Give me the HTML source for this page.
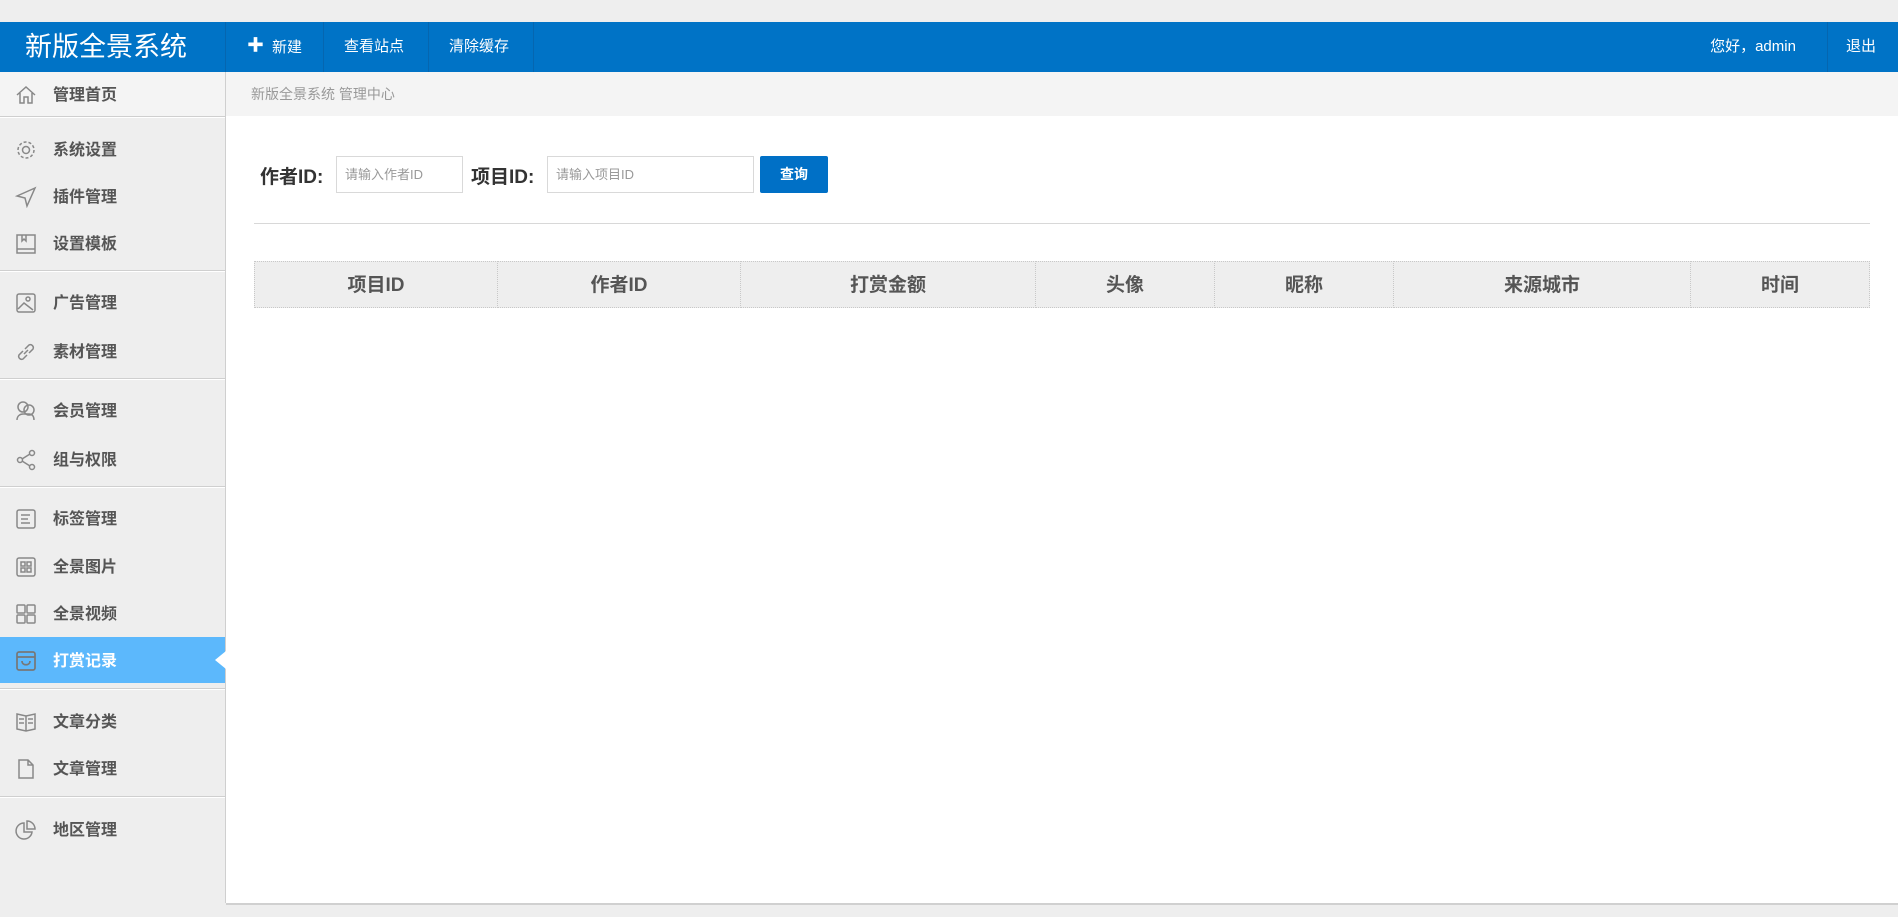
<!DOCTYPE html>
<html><head><meta charset="utf-8"><style>
*{margin:0;padding:0;box-sizing:border-box}
body{width:1898px;height:917px;background:#eeeeee;font-family:"Liberation Sans","Noto Sans CJK SC",sans-serif;position:relative;overflow:hidden}
.abs{position:absolute}
#hdr{left:0;top:22px;width:1898px;height:50px;background:#0073c6}
.logo{left:25px;top:22px;height:50px;line-height:50px;color:#fff;font-size:27px}
.nav{top:22px;height:50px;line-height:50px;color:#fff;font-size:15px;text-align:center;border-left:1px solid #0566b0}
#side{left:0;top:72px;width:226px;height:831px;background:#eeeeee;border-right:1px solid #cfcfcf}
.it{left:0;width:225px;height:46px;line-height:46px;font-size:16px;font-weight:bold;color:#555}
.it span{position:absolute;left:53px;top:2px}
.it svg{position:absolute;left:15px;top:13px}
.bd{left:0;width:225px;height:2px;border-top:1px solid #cfcfcf;border-bottom:1px solid #fff}
#crumb{left:226px;top:72px;width:1672px;height:44px;background:#f4f4f4;color:#999;font-size:14px;line-height:44px;padding-left:25px}
#main{left:226px;top:116px;width:1672px;height:787px;background:#fff}
.lbl{font-size:19px;font-weight:bold;color:#333;top:162px}
.inp{top:156px;height:37px;border:1px solid #d9d9d9;background:#fff;color:#999;font-size:13px;line-height:35px;padding-left:8px}
.th{top:261px;height:47px;line-height:47px;background:#eeeeee;border:1px dotted #c8c8c8;text-align:center;font-size:19px;font-weight:bold;color:#555}
</style></head><body>
<div id="hdr" class="abs"></div>
<div class="abs logo">新版全景系统</div>
<div class="abs nav" style="left:225px;width:98px"><span style="font-weight:bold;font-size:17px;margin-right:8px;position:relative;top:-1px">✚</span>新建</div>
<div class="abs nav" style="left:323px;width:105px;text-indent:-4px">查看站点</div>
<div class="abs nav" style="left:428px;width:105px;text-indent:-4px">清除缓存</div>
<div class="abs nav" style="left:533px;width:0;height:50px"></div>
<div class="abs nav" style="left:1690px;width:126px;border:none">您好，admin</div>
<div class="abs nav" style="left:1827px;width:71px;text-indent:-4px">退出</div>

<div id="side" class="abs"></div>
<div class="abs" style="left:0;top:72px;width:225px;height:44px;background:#f4f4f4"></div>
<div class="abs it" style="top:71px"><svg width="22" height="22" viewBox="0 0 22 22" fill="none" stroke="#888" stroke-width="1.5"><path d="M2 11L11 3l9 8M5 9v10h4v-6h4v6h4V9"/></svg><span>管理首页</span></div>
<div class="abs bd" style="top:116px"></div>
<div class="abs it" style="top:126px"><svg width="22" height="22" viewBox="0 0 22 22" fill="none" stroke="#888" stroke-width="1.5"><circle cx="11" cy="11" r="3.5"/><circle cx="11" cy="11" r="8" stroke-dasharray="3 2"/></svg><span>系统设置</span></div>
<div class="abs it" style="top:173px"><svg width="22" height="22" viewBox="0 0 22 22" fill="none" stroke="#888" stroke-width="1.5"><path d="M20 2L2 10l8 2 2 8z"/></svg><span>插件管理</span></div>
<div class="abs it" style="top:220px"><svg width="22" height="22" viewBox="0 0 22 22" fill="none" stroke="#888" stroke-width="1.5"><rect x="2" y="2" width="18" height="18"/><path d="M2 16h18M7 2v6l2-2 2 2V2"/></svg><span>设置模板</span></div>
<div class="abs bd" style="top:270px"></div>
<div class="abs it" style="top:279px"><svg width="22" height="22" viewBox="0 0 22 22" fill="none" stroke="#888" stroke-width="1.5"><rect x="2" y="2" width="18" height="18" rx="2"/><circle cx="13" cy="7" r="2"/><path d="M3 17l6-6 9 7"/></svg><span>广告管理</span></div>
<div class="abs it" style="top:328px"><svg width="22" height="22" viewBox="0 0 22 22" fill="none" stroke="#888" stroke-width="1.5"><path d="M9 13l4-4M8 10l-4 4a3 3 0 004 4l4-4M14 12l4-4a3 3 0 00-4-4l-4 4"/></svg><span>素材管理</span></div>
<div class="abs bd" style="top:378px"></div>
<div class="abs it" style="top:387px"><svg width="22" height="22" viewBox="0 0 22 22" fill="none" stroke="#888" stroke-width="1.5"><circle cx="8" cy="7" r="5"/><circle cx="14" cy="10" r="5"/><path d="M2 20c0-4 3-6 6-6h6c3 0 5 2 5 6"/></svg><span>会员管理</span></div>
<div class="abs it" style="top:436px"><svg width="22" height="22" viewBox="0 0 22 22" fill="none" stroke="#888" stroke-width="1.5"><circle cx="5" cy="11" r="2.5"/><circle cx="17" cy="4" r="2.5"/><circle cx="17" cy="18" r="2.5"/><path d="M7 10l8-5M7 12l8 5"/></svg><span>组与权限</span></div>
<div class="abs bd" style="top:486px"></div>
<div class="abs it" style="top:495px"><svg width="22" height="22" viewBox="0 0 22 22" fill="none" stroke="#888" stroke-width="1.5"><rect x="2" y="2" width="18" height="18" rx="2"/><path d="M6 7h9M6 11h7M6 15h9"/></svg><span>标签管理</span></div>
<div class="abs it" style="top:543px"><svg width="22" height="22" viewBox="0 0 22 22" fill="none" stroke="#888" stroke-width="1.5"><rect x="2" y="2" width="18" height="18" rx="2"/><rect x="6" y="6" width="4" height="4"/><rect x="12" y="6" width="4" height="4"/><rect x="6" y="12" width="4" height="4"/><rect x="12" y="12" width="4" height="4"/></svg><span>全景图片</span></div>
<div class="abs it" style="top:590px"><svg width="22" height="22" viewBox="0 0 22 22" fill="none" stroke="#888" stroke-width="1.5"><rect x="2" y="2" width="8" height="8" rx="1"/><rect x="12" y="2" width="8" height="8" rx="1"/><rect x="2" y="12" width="8" height="8" rx="1"/><rect x="12" y="12" width="8" height="8" rx="1"/></svg><span>全景视频</span></div>
<div class="abs it" style="top:637px;background:#5cb8fc;color:#fff"><svg width="22" height="22" viewBox="0 0 22 22" fill="none" stroke="#777" stroke-width="1.7"><rect x="2" y="2" width="18" height="18" rx="2"/><path d="M2 7h18M7 11c0 5 8 5 8 0"/></svg><span>打赏记录</span></div>
<div class="abs" style="left:215px;top:651px;width:0;height:0;border-top:9px solid transparent;border-bottom:9px solid transparent;border-right:11px solid #fff"></div>
<div class="abs bd" style="top:688px"></div>
<div class="abs it" style="top:698px"><svg width="22" height="22" viewBox="0 0 22 22" fill="none" stroke="#888" stroke-width="1.5"><path d="M11 5v15M2 3l9 2 9-2v15l-9 2-9-2zM4 8h5M4 12h5M13 8h5M13 12h5"/></svg><span>文章分类</span></div>
<div class="abs it" style="top:745px"><svg width="22" height="22" viewBox="0 0 22 22" fill="none" stroke="#888" stroke-width="1.5"><path d="M4 2h9l5 5v13H4zM13 2v5h5"/></svg><span>文章管理</span></div>
<div class="abs bd" style="top:796px"></div>
<div class="abs it" style="top:806px"><svg width="22" height="22" viewBox="0 0 22 22" fill="none" stroke="#888" stroke-width="1.5"><path d="M9 4a8 8 0 108 9H9z"/><path d="M12 2v8h8a8 8 0 00-8-8z"/></svg><span>地区管理</span></div>

<div id="crumb" class="abs">新版全景系统 管理中心</div>
<div id="main" class="abs"></div>
<div class="abs" style="left:226px;top:903px;width:1672px;height:2px;background:#d0d0d0"></div>

<div class="abs lbl" style="left:260px">作者ID:</div>
<div class="abs inp" style="left:336px;width:127px">请输入作者ID</div>
<div class="abs lbl" style="left:471px">项目ID:</div>
<div class="abs inp" style="left:547px;width:207px">请输入项目ID</div>
<div class="abs" style="left:760px;top:156px;width:68px;height:37px;background:#0070c6;border-radius:2px;color:#fff;font-size:14px;font-weight:bold;text-align:center;line-height:37px">查询</div>
<div class="abs" style="left:254px;top:223px;width:1616px;height:1px;background:#d8d8d8"></div>

<div class="abs th" style="left:254px;width:244px">项目ID</div>
<div class="abs th" style="left:497px;width:244px">作者ID</div>
<div class="abs th" style="left:740px;width:296px">打赏金额</div>
<div class="abs th" style="left:1035px;width:180px">头像</div>
<div class="abs th" style="left:1214px;width:180px">昵称</div>
<div class="abs th" style="left:1393px;width:298px">来源城市</div>
<div class="abs th" style="left:1690px;width:180px">时间</div>
</body></html>
